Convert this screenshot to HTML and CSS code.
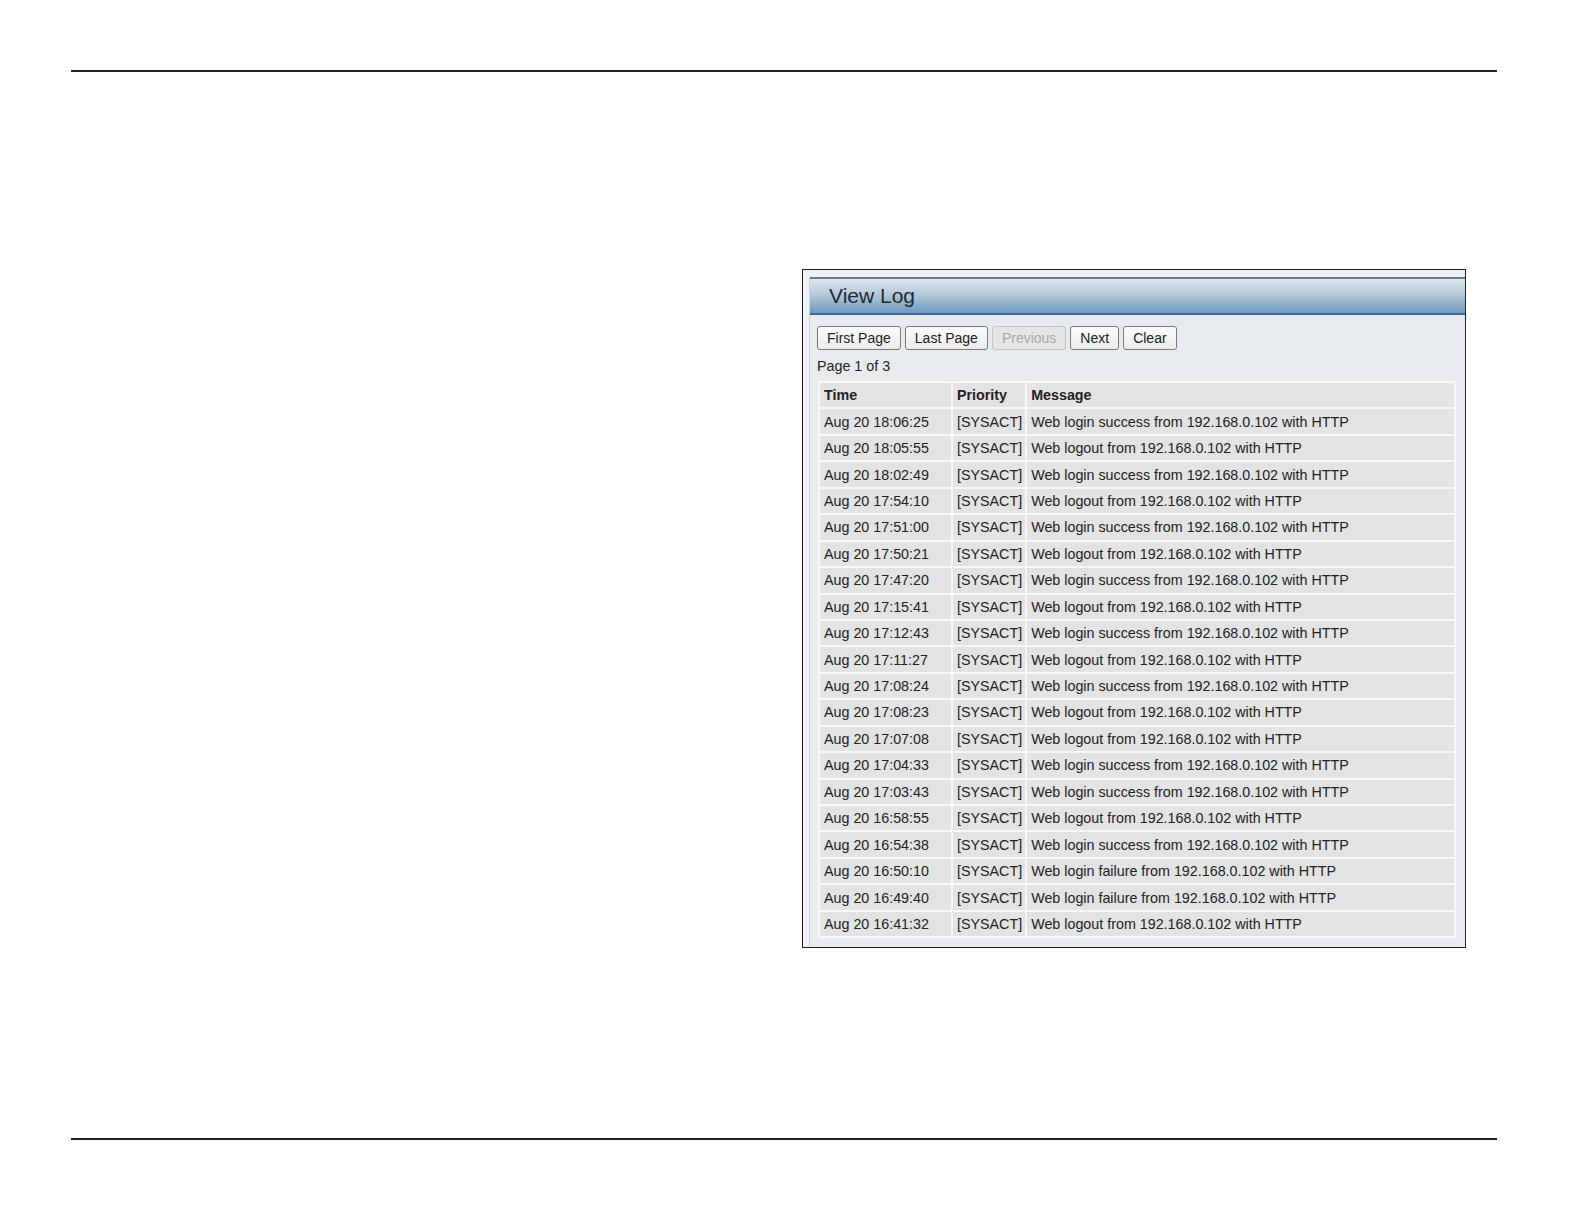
FILE: index.html
```html
<!DOCTYPE html>
<html lang="en">
<head>
    <meta charset="UTF-8">
    <meta name="viewport" content="width=device-width, initial-scale=1.0">
    <title>View Log</title>
    <link rel="stylesheet" href="styles.css">
</head>
<body>
    <div class="rule top-rule"></div>

    <div class="page">
        <div class="shot">
            <div class="panel">
                <div class="panel-head">View Log</div>
                <div class="panel-body">
                    <div class="btns">
                        <button class="btn">First Page</button>
                        <button class="btn">Last Page</button>
                        <button class="btn off" disabled>Previous</button>
                        <button class="btn">Next</button>
                        <button class="btn">Clear</button>
                    </div>
                    <div class="pager">Page 1 of 3</div>
                    <table class="log">
                        <tr><th class="c-time">Time</th><th class="c-pri">Priority</th><th>Message</th></tr>
                        <tr><td>Aug 20 18:06:25</td><td>[SYSACT]</td><td>Web login success from 192.168.0.102 with HTTP</td></tr>
                        <tr><td>Aug 20 18:05:55</td><td>[SYSACT]</td><td>Web logout from 192.168.0.102 with HTTP</td></tr>
                        <tr><td>Aug 20 18:02:49</td><td>[SYSACT]</td><td>Web login success from 192.168.0.102 with HTTP</td></tr>
                        <tr><td>Aug 20 17:54:10</td><td>[SYSACT]</td><td>Web logout from 192.168.0.102 with HTTP</td></tr>
                        <tr><td>Aug 20 17:51:00</td><td>[SYSACT]</td><td>Web login success from 192.168.0.102 with HTTP</td></tr>
                        <tr><td>Aug 20 17:50:21</td><td>[SYSACT]</td><td>Web logout from 192.168.0.102 with HTTP</td></tr>
                        <tr><td>Aug 20 17:47:20</td><td>[SYSACT]</td><td>Web login success from 192.168.0.102 with HTTP</td></tr>
                        <tr><td>Aug 20 17:15:41</td><td>[SYSACT]</td><td>Web logout from 192.168.0.102 with HTTP</td></tr>
                        <tr><td>Aug 20 17:12:43</td><td>[SYSACT]</td><td>Web login success from 192.168.0.102 with HTTP</td></tr>
                        <tr><td>Aug 20 17:11:27</td><td>[SYSACT]</td><td>Web logout from 192.168.0.102 with HTTP</td></tr>
                        <tr><td>Aug 20 17:08:24</td><td>[SYSACT]</td><td>Web login success from 192.168.0.102 with HTTP</td></tr>
                        <tr><td>Aug 20 17:08:23</td><td>[SYSACT]</td><td>Web logout from 192.168.0.102 with HTTP</td></tr>
                        <tr><td>Aug 20 17:07:08</td><td>[SYSACT]</td><td>Web logout from 192.168.0.102 with HTTP</td></tr>
                        <tr><td>Aug 20 17:04:33</td><td>[SYSACT]</td><td>Web login success from 192.168.0.102 with HTTP</td></tr>
                        <tr><td>Aug 20 17:03:43</td><td>[SYSACT]</td><td>Web login success from 192.168.0.102 with HTTP</td></tr>
                        <tr><td>Aug 20 16:58:55</td><td>[SYSACT]</td><td>Web logout from 192.168.0.102 with HTTP</td></tr>
                        <tr><td>Aug 20 16:54:38</td><td>[SYSACT]</td><td>Web login success from 192.168.0.102 with HTTP</td></tr>
                        <tr><td>Aug 20 16:50:10</td><td>[SYSACT]</td><td>Web login failure from 192.168.0.102 with HTTP</td></tr>
                        <tr><td>Aug 20 16:49:40</td><td>[SYSACT]</td><td>Web login failure from 192.168.0.102 with HTTP</td></tr>
                        <tr><td>Aug 20 16:41:32</td><td>[SYSACT]</td><td>Web logout from 192.168.0.102 with HTTP</td></tr>
                    </table>
                </div>
            </div>
        </div>
    </div>

    <div class="rule bottom-rule"></div>
</body>
</html>
```
FILE: styles.css
```css
body,*{margin: 0;padding: 0;}
body{
    background: #fff;
    font-family: "Liberation Sans", Arial, sans-serif;
    color: #222;
}
.rule{
    height: 2px;
    background: #222;
    margin-left: 71px;
    width: 1426px;
}
.top-rule{margin-top: 70px;}
.bottom-rule{margin-top: 190px;}

.page{
    padding-top: 197px;
    padding-left: 802px;
}
.shot{
    width: 664px;
    height: 679px;
    box-sizing: border-box;
    border: 1px solid #222;
    background: #eef3f7;
    padding: 7px 0 0 6px;
}
.panel{
    height: 100%;
    border-left: 1px solid #c4d2de;
    background: #e8ebee;
}
.panel-head{
    height: 34px;
    border-top: 2px solid #6b7a88;
    border-bottom: 2px solid #45639a;
    background: linear-gradient(#dfe7ee, #b6c9d8 45%, #7ea5c4 85%, #6f9ac0);
    font-size: 21px;
    line-height: 34px;
    padding-left: 19px;
    color: #1f2a36;
}
.panel-body{
    padding: 11px 10px 0 7px;
}
.btns{
    display: flex;
    gap: 4px;
    height: 24px;
}
.btn{
    height: 24px;
    padding: 0 9px;
    border: 1px solid #7a7a7a;
    border-radius: 3px;
    background: linear-gradient(#fbfbfb, #ececec);
    font-family: "Liberation Sans", Arial, sans-serif;
    font-size: 14px;
    color: #222;
}
.btn.off{
    border-color: #c4c4c4;
    color: #a8a8a8;
    background: #e6e6e6;
}
.pager{
    font-size: 14.3px;
    margin-top: 7px;
    height: 18px;
    line-height: 18px;
}
.log{
    margin-top: 6px;
    margin-left: 1px;
    width: 638px;
    border-collapse: separate;
    border-spacing: 2px;
    background: #f7f7f7;
    font-size: 14.3px;
}
.log th, .log td{
    background: #e3e3e3;
    height: 24.45px;
    padding: 0 3px 0 4px;
    text-align: left;
    white-space: nowrap;
}
.log th{font-weight: bold;}
.c-time{width: 124px;}
.c-pri{width: 64px;}
```
